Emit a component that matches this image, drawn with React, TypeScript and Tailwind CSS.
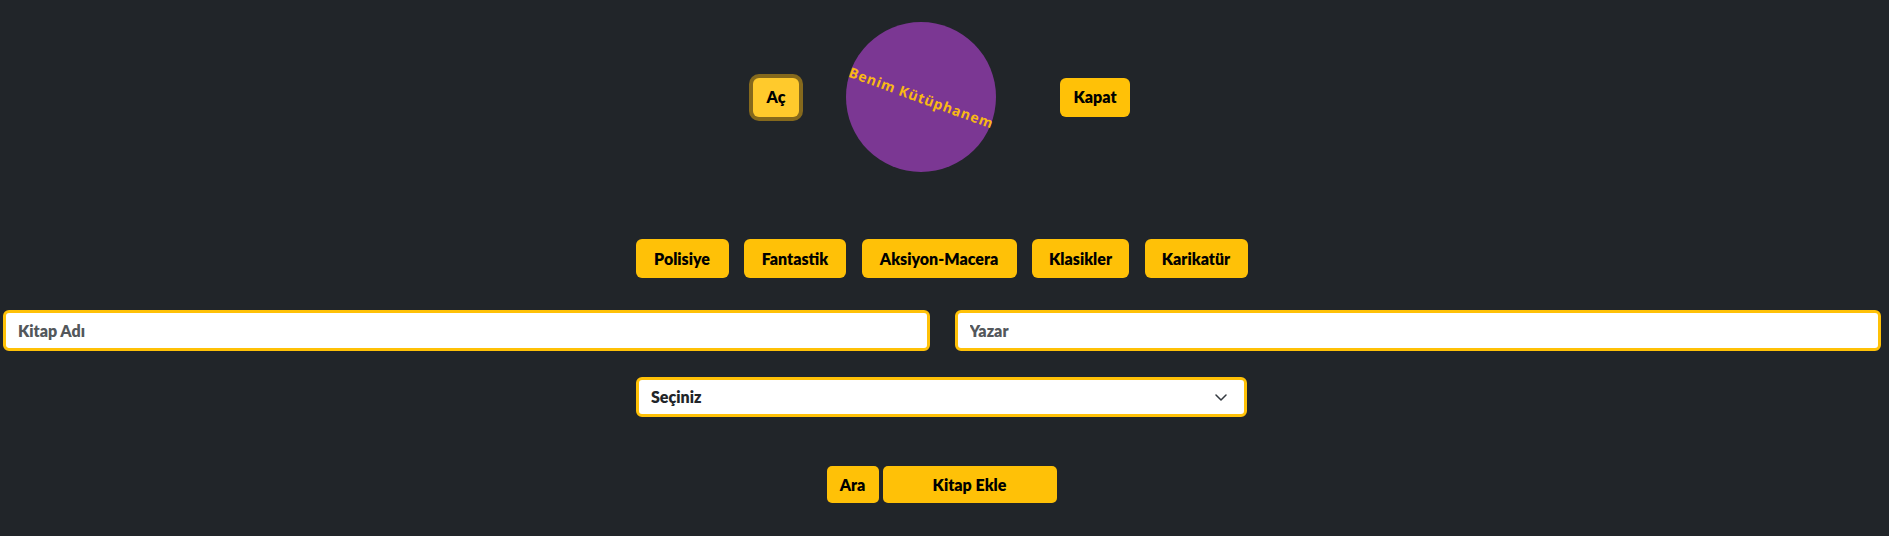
import React from "react";

const categories = [
  { name: "Polisiye", w: "w-[93px]" },
  { name: "Fantastik", w: "w-[102px]" },
  { name: "Aksiyon-Macera", w: "w-[155px]" },
  { name: "Klasikler", w: "w-[97px]" },
  { name: "Karikatür", w: "w-[103px]" },
];

function App() {
  return (
    <div className="w-full min-h-screen bg-[#212529] font-['Lato','Liberation_Sans',sans-serif]">
      <div className="w-[1883px] h-[536px] pt-[22px] flex flex-col items-center">
        {/* Header */}
        <div className="flex items-center h-[150px]">
          <button className="w-[46px] h-[39px] rounded-[6px] bg-[#ffca2c] text-black font-extrabold text-[16px] shadow-[0_0_0_4px_#85691c] mr-[47px]">
            Aç
          </button>
          <div className="w-[150px] h-[150px] rounded-full bg-[#7b3793] flex items-center justify-center">
            <span className="rotate-[20deg] text-[#f9b914] text-[14px] font-bold tracking-[0.8px] whitespace-nowrap font-['Open_Sans',sans-serif]">
              Benim Kütüphanem
            </span>
          </div>
          <button className="w-[70px] h-[39px] rounded-[6px] bg-[#ffc107] text-black font-extrabold text-[16px] ml-[64px]">
            Kapat
          </button>
        </div>

        {/* Categories */}
        <div className="flex gap-[15.5px] mt-[67px]">
          {categories.map((c) => (
            <button
              key={c.name}
              className={`${c.w} h-[39px] rounded-[6px] bg-[#ffc107] text-black font-extrabold text-[16px]`}
            >
              {c.name}
            </button>
          ))}
        </div>

        {/* Inputs */}
        <div className="w-full flex gap-[25px] pl-[3px] pr-[2px] mt-[32px]">
          <input
            placeholder="Kitap Adı"
            className="flex-1 h-[41px] rounded-[6px] border-[3px] border-[#ffc107] bg-white px-[12px] text-[16px] font-extrabold text-[#212529] placeholder:text-[#53575b] outline-none"
          />
          <input
            placeholder="Yazar"
            className="flex-1 h-[41px] rounded-[6px] border-[3px] border-[#ffc107] bg-white px-[12px] text-[16px] font-extrabold text-[#212529] placeholder:text-[#53575b] outline-none"
          />
        </div>

        {/* Select */}
        <div className="w-[611px] h-[40px] mt-[26px] rounded-[6px] border-[3px] border-[#ffc107] bg-white flex items-center justify-between pl-[12px] pr-[17px]">
          <span className="text-[16px] font-extrabold text-[#212529]">Seçiniz</span>
          <svg width="12" height="7" viewBox="0 0 12 7" fill="none">
            <polyline
              points="1,1 6,6 11,1"
              stroke="#343a40"
              strokeWidth="1.5"
              strokeLinecap="round"
              strokeLinejoin="round"
            />
          </svg>
        </div>

        {/* Actions */}
        <div className="flex gap-[4px] mt-[49px]">
          <button className="w-[52px] h-[37px] rounded-[5px] bg-[#ffc107] text-black font-extrabold text-[16px]">
            Ara
          </button>
          <button className="w-[174px] h-[37px] rounded-[5px] bg-[#ffc107] text-black font-extrabold text-[16px]">
            Kitap Ekle
          </button>
        </div>
      </div>
    </div>
  );
}

export default App;
